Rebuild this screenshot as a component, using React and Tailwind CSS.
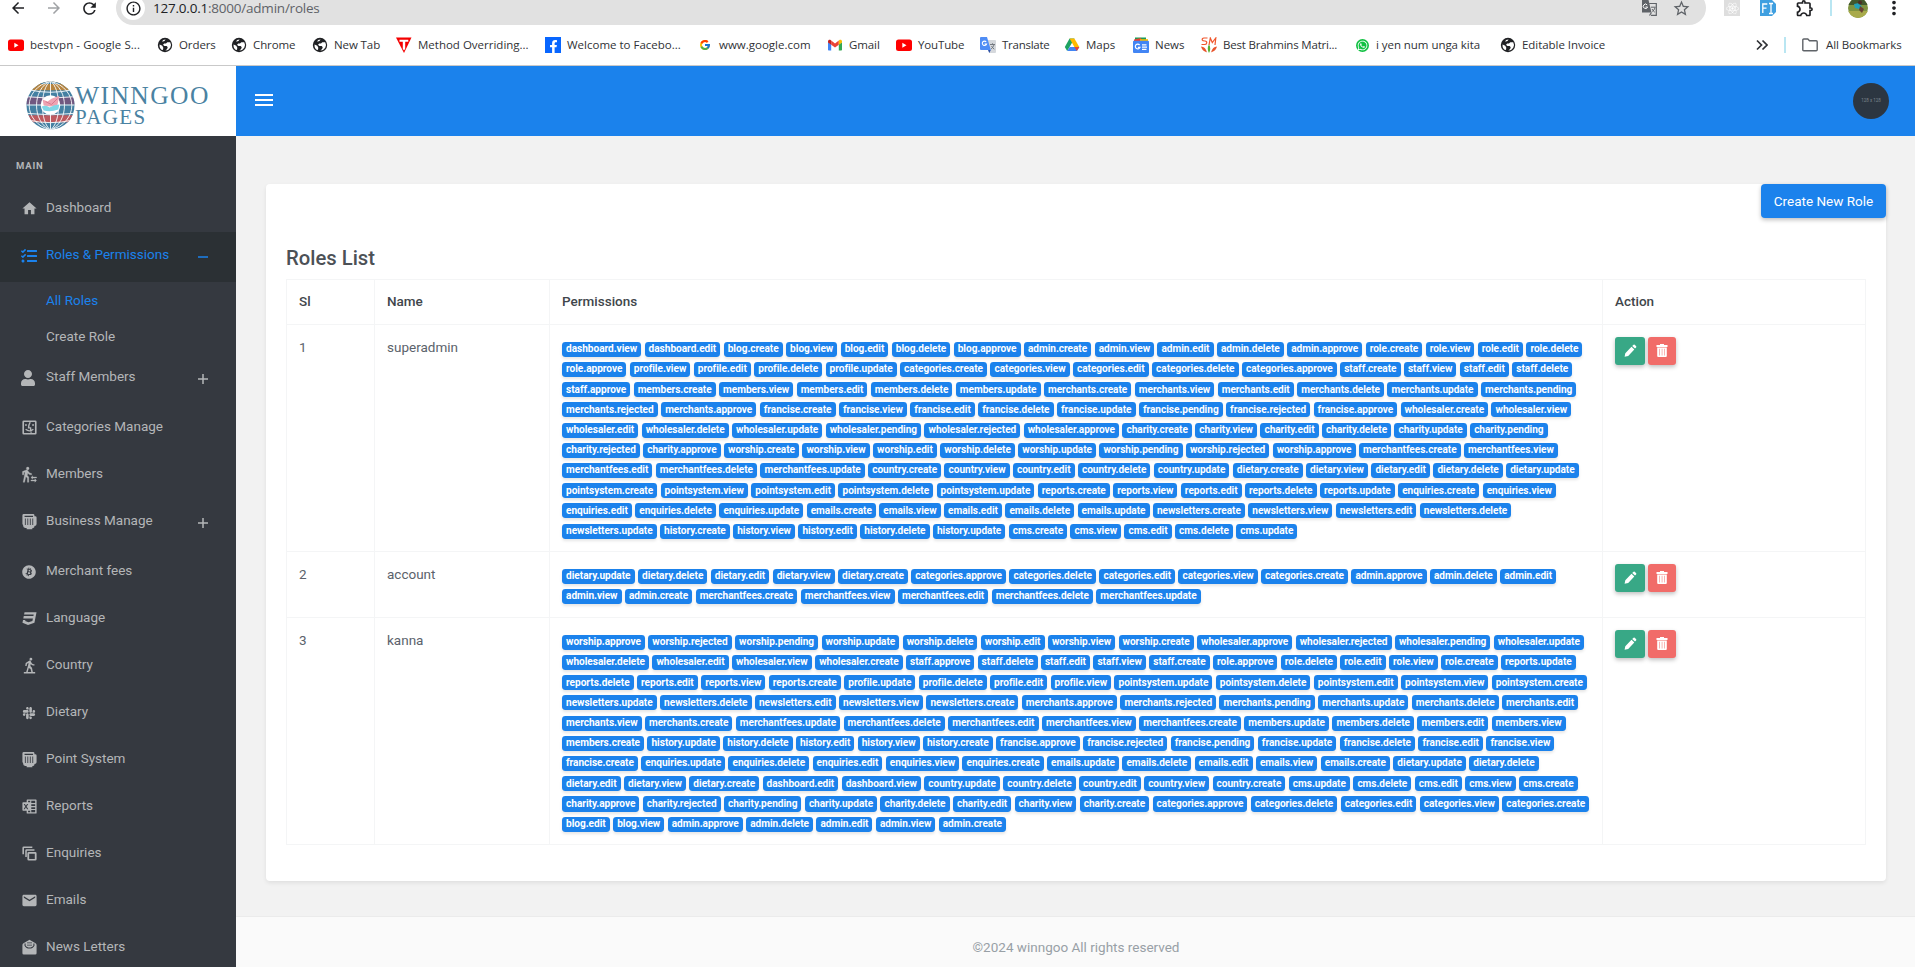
import {
  MdHome, MdEmail, MdArrowBack, MdArrowForward, MdRefresh, MdInfoOutline, MdStarOutline, MdMoreVert, MdOutlineExtension,
} from "react-icons/md";
import { FaTasks, FaUser, FaBitcoin, FaSlack, FaReact, FaWhatsapp, FaFacebookF } from "react-icons/fa";
import { RiCss3Fill } from "react-icons/ri";
import { FcGoogle } from "react-icons/fc";

const A = (group, actions) => actions.split(" ").map((a) => `${group}.${a}`);

const superadmin = [
  ...A("dashboard", "view edit"),
  ...A("blog", "create view edit delete approve"),
  ...A("admin", "create view edit delete approve"),
  ...A("role", "create view edit delete approve"),
  ...A("profile", "view edit delete update"),
  ...A("categories", "create view edit delete approve"),
  ...A("staff", "create view edit delete approve"),
  ...A("members", "create view edit delete update"),
  ...A("merchants", "create view edit delete update pending rejected approve"),
  ...A("francise", "create view edit delete update pending rejected approve"),
  ...A("wholesaler", "create view edit delete update pending rejected approve"),
  ...A("charity", "create view edit delete update pending rejected approve"),
  ...A("worship", "create view edit delete update pending rejected approve"),
  ...A("merchantfees", "create view edit delete update"),
  ...A("country", "create view edit delete update"),
  ...A("dietary", "create view edit delete update"),
  ...A("pointsystem", "create view edit delete update"),
  ...A("reports", "create view edit delete update"),
  ...A("enquiries", "create view edit delete update"),
  ...A("emails", "create view edit delete update"),
  ...A("newsletters", "create view edit delete update"),
  ...A("history", "create view edit delete update"),
  ...A("cms", "create view edit delete update"),
];

const account = [
  ...A("dietary", "update delete edit view create"),
  ...A("categories", "approve delete edit view create"),
  ...A("admin", "approve delete edit view create"),
  ...A("merchantfees", "create view edit delete update"),
];

const kanna = [
  ...A("worship", "approve rejected pending update delete edit view create"),
  ...A("wholesaler", "approve rejected pending update delete edit view create"),
  ...A("staff", "approve delete edit view create"),
  ...A("role", "approve delete edit view create"),
  ...A("reports", "update delete edit view create"),
  ...A("profile", "update delete edit view"),
  ...A("pointsystem", "update delete edit view create"),
  ...A("newsletters", "update delete edit view create"),
  ...A("merchants", "approve rejected pending update delete edit view create"),
  ...A("merchantfees", "update delete edit view create"),
  ...A("members", "update delete edit view create"),
  ...A("history", "update delete edit view create"),
  ...A("francise", "approve rejected pending update delete edit view create"),
  ...A("enquiries", "update delete edit view create"),
  ...A("emails", "update delete edit view create"),
  ...A("dietary", "update delete edit view create"),
  ...A("dashboard", "edit view"),
  ...A("country", "update delete edit view create"),
  ...A("cms", "update delete edit view create"),
  ...A("charity", "approve rejected pending update delete edit view create"),
  ...A("categories", "approve delete edit view create"),
  ...A("blog", "edit view"),
  ...A("admin", "approve delete edit view create"),
];

const roles = [
  { id: 1, name: "superadmin", permissions: superadmin, h: "h-[227px]" },
  { id: 2, name: "account", permissions: account, h: "h-[66px]" },
  { id: 3, name: "kanna", permissions: kanna, h: "h-[227px]" },
];

/* ---------- browser icons ---------- */

const YouTube = () => (
  <svg viewBox="0 0 16 16" className="size-4"><rect y="2.5" width="16" height="11.5" rx="2.5" fill="#f00" /><path d="M6.3 5.8v5l4.2-2.5z" fill="#fff" /></svg>
);
const Globe = () => (
  <svg viewBox="0 0 16 16" className="size-4">
    <circle cx="8" cy="8" r="7.2" fill="#202124" />
    <path d="M13.2 5.2H10.3L9 6.6H7.2L6 7.8l1.4 1.3h2.3l1 1.2-.6 1.6-1.7 1.5A5.4 5.4 0 0 0 13.2 5.2zM2.6 7.4l2.7 1.4 1 2-.3 1.9-1 .2A5.6 5.6 0 0 1 2.6 7.4zM6 3l2.600-.4L7.500 4 5.200 4.800z" fill="#fff" />
  </svg>
);
const TIcon = () => (
  <svg viewBox="0 0 16 16" className="size-4"><path d="M0 0.500h15.500L8 16z" fill="#f40000" /><path d="M3.500 2.800h8.800v2H9.200v7L8 13.500l-1.200-1.700v-7H3.500z" fill="#fff" /></svg>
);
const Fb = () => (
  <span className="flex size-4 items-end justify-center bg-[#0866ff] text-white"><FaFacebookF size={13} /></span>
);
const Gmail = () => (
  <svg viewBox="0 0 16 16" className="size-4">
    <path d="M1 4v8.500c0 .6.4 1 1 1h2.200V7.500L1 5z" fill="#4285f4" /><path d="M15 4v8.500c0 .6-.4 1-1 1h-2.200V7.500L15 5z" fill="#34a853" />
    <path d="M4.200 3.600V7.700L8 10.500l3.800-2.800V3.600L8 6.400z" fill="#ea4335" /><path d="M1 4.500C1 3 2.600 2.300 3.800 3.200l.4.400v4.100L1 5.400z" fill="#c5221f" />
    <path d="M15 4.500c0-1.500-1.600-2.200-2.800-1.300l-.4.400v4.100L15 5.400z" fill="#fbbc04" />
  </svg>
);
const Translate = () => (
  <svg viewBox="0 0 16 16" className="size-4">
    <path d="M6 3h9a1 1 0 0 1 1 1v11a1 1 0 0 1-1 1H9z" fill="#d5d8dc" /><path d="M1 0h6l3.800 13H1a1 1 0 0 1-1-1V1a1 1 0 0 1 1-1z" fill="#4f8df5" />
    <path d="M8 13h2.800L9.300 16z" fill="#2b50a8" />
    <path d="M6.200 4.900A2.200 2.200 0 1 0 6.600 7H4.500" fill="none" stroke="#fff" strokeWidth="1.100" /><path d="M10 7.500h5M12.500 6.300v1.200M14 7.800c-.6 2-1.700 3.300-3 4.200M11.500 9c.8 1.500 1.700 2.500 2.800 3.200" fill="none" stroke="#6b7177" strokeWidth=".9" />
  </svg>
);
const Maps = () => (
  <svg viewBox="0 0 16 16" className="size-4">
    <path d="M5.600 1.500h4.800L8 5.800 3.200 14 .8 10z" fill="#1ea362" /><path d="M5.600 1.500h4.800L15.300 10h-4.900z" fill="#ffba00" />
    <path d="M3.200 14 5.700 10h9.600l-2.400 4z" fill="#4285f4" /><path d="M12.900 14 10.400 10h4.900z" fill="#ea4335" />
  </svg>
);
const News = () => (
  <svg viewBox="0 0 16 16" className="size-4">
    <path d="M2 .5h11v4H2z" fill="#1a9c55" /><path d="M1 2.500 8 1l1 3H1z" fill="#ea4335" /><path d="M7 2.200h8V5H7z" fill="#fbbc04" />
    <rect y="3.800" width="16" height="12.200" rx="1" fill="#4285f4" />
    <path d="M6.600 8A2.400 2.400 0 1 0 7 10.300H4.900M9 7.800h4.500M9 10.100h5M9 12.400h4.500" fill="none" stroke="#fff" strokeWidth="1.200" />
  </svg>
);
const Matri = () => (
  <svg viewBox="0 0 16 16" className="size-4">
    <path d="M6.500 1H3Q.8 1.200 1.300 3q.3 1 2.700 1 2 .2 1.700 1.800Q5.400 7.500 3.500 7.500H.5M8 8l1.300-7 2 4.500L14.800 1 14 8" fill="none" stroke="#f0552b" strokeWidth="1.200" />
    <path d="M0 9.500c3 .3 5 2 6 6-2-1-5-2-6-6zM16 9.500c-3 .3-5 2-6 6 2-1 5-2 6-6z" fill="#e8552d" /><path d="M8 7.500c1.800 2.500 1.500 6 0 8.500-1.500-2.500-1.800-6 0-8.500z" fill="#57b031" />
  </svg>
);
const WhatsApp = () => (
  <span className="flex size-4 items-center justify-center"><span className="flex size-[13px] items-center justify-center rounded-full bg-[#12c143] text-white"><FaWhatsapp size={11} /></span></span>
);

const bookmarks = [
  { label: "bestvpn - Google S...", icon: <YouTube />, w: "w-[149px]", t: "tracking-[0.06px]" },
  { label: "Orders", icon: <Globe />, w: "w-[74px]", t: "tracking-[-0.1px]" },
  { label: "Chrome", icon: <Globe />, w: "w-[81px]", t: "tracking-[-0.1px]" },
  { label: "New Tab", icon: <Globe />, w: "w-[84px]", t: "tracking-[-0.1px]" },
  { label: "Method Overriding...", icon: <TIcon />, w: "w-[149px]", t: "" },
  { label: "Welcome to Facebo...", icon: <Fb />, w: "w-[152px]", t: "" },
  { label: "www.google.com", icon: <span className="flex size-4 items-center justify-center"><FcGoogle size={12} /></span>, w: "w-[130px]", t: "" },
  { label: "Gmail", icon: <Gmail />, w: "w-[69px]", t: "tracking-[-0.1px]" },
  { label: "YouTube", icon: <YouTube />, w: "w-[84px]", t: "tracking-[-0.15px]" },
  { label: "Translate", icon: <Translate />, w: "w-[84px]", t: "tracking-[-0.25px]" },
  { label: "Maps", icon: <Maps />, w: "w-[69px]", t: "" },
  { label: "News", icon: <News />, w: "w-[68px]", t: "" },
  { label: "Best Brahmins Matri...", icon: <Matri />, w: "w-[153px]", t: "tracking-[-0.2px]" },
  { label: "i yen num unga kita", icon: <WhatsApp />, w: "w-[146px]", t: "tracking-[-0.05px]" },
  { label: "Editable Invoice", icon: <Globe />, w: "w-[130px]", t: "tracking-[-0.05px]" },
];

function Browser() {
  return (
    <div className="h-[66px] shrink-0 overflow-hidden border-b border-[#c9c9c9] bg-white font-['Open_Sans',sans-serif] text-[#303236]">
      <div className="-mt-[9px] flex h-[34px] items-center">
        <div className="flex w-[116px] items-center pl-[9px]">
          <MdArrowBack size={18} className="text-[#202124]" />
          <MdArrowForward size={18} className="ml-[18px] text-[#a0a2a5]" />
          <MdRefresh size={19} className="ml-[17px] text-[#202124]" />
        </div>
        <div className="flex h-[34px] w-[1590px] items-center rounded-full bg-[#e1e1e1] pl-[5px]">
          <span className="flex size-6 items-center justify-center rounded-full bg-white text-[#202124]"><MdInfoOutline size={17} /></span>
          <span className="ml-[8px] text-[13.500px] tracking-[-0.220px] text-[#202124]">127.0.0.1<span className="text-[#5f6368]">:8000/admin/roles</span></span>
          <svg viewBox="0 0 16 16" className="ml-auto size-4">
            <path d="M1 0h6.500l3 12.500H1z" fill="#5f6368" /><path d="M8.200 3.500H15.300V15.300H10M8.500 15.500l2-3" fill="none" stroke="#5f6368" strokeWidth="1.200" />
            <path d="M6.200 4.900A2.200 2.200 0 1 0 6.600 7H4.500" fill="none" stroke="#fff" /><path d="M10 7.200h4.500M14 7.500c-.6 2-1.500 3.300-2.600 4.200M11 9c.8 1.500 1.700 2.500 2.800 3.200" fill="none" stroke="#5f6368" />
          </svg>
          <MdStarOutline size={19} className="mr-[15px] ml-[15px] text-[#5f6368]" />
        </div>
        <span className="ml-[18px] flex size-4 items-center justify-center bg-[#dedede] text-white"><FaReact size={13} /></span>
        <svg viewBox="0 0 16 16" className="ml-5 size-4">
          <path d="M0 0h12l4 4v8l-4 4H0z" fill="#3f9fe0" /><path d="M2.800 13V4h4.500M2.800 8.200h3.700M9 3.500h4M9 13.500h4M11 3.500v10" fill="none" stroke="#fff" strokeWidth="1.300" />
        </svg>
        <MdOutlineExtension size={20} className="ml-[19px] text-[#202124]" />
        <span className="ml-[15px] h-4 w-[2px] bg-[#b9e6f2]" />
        <svg viewBox="0 0 20 20" className="ml-4 size-5">
          <defs><clipPath id="face"><circle cx="10" cy="10" r="10" /></clipPath></defs>
          <g clipPath="url(#face)"><rect width="20" height="20" fill="#7f9440" /><rect width="20" height="7" fill="#42582d" /><path d="M0 13h20v7H0z" fill="#a9ab4b" /><path d="M6 6l5-1 3 4-3 2-4-1z" fill="#23a2b8" /><path d="M12 8l4 3-2 4-3-3z" fill="#6a4334" /><circle cx="12" cy="4.500" r="2" fill="#4b2f25" /></g>
        </svg>
        <MdMoreVert size={22} className="ml-[15px] text-[#202124]" />
      </div>
      <div className="flex h-[40px] items-center pl-2 text-[11.500px] whitespace-nowrap">
        {bookmarks.map((b) => (
          <div key={b.label} className={`flex shrink-0 items-center gap-[6px] ${b.w}`}>
            {b.icon}
            <span className={b.t}>{b.label}</span>
          </div>
        ))}
        <svg viewBox="0 0 12 12" className="ml-[126px] size-3" fill="none" stroke="#303236" strokeWidth="1.700"><path d="M1 1.500 5.500 6 1 10.500M6.500 1.500 11 6l-4.500 4.500" /></svg>
        <span className="ml-4 h-4 w-[2px] bg-[#b9e6f2]" />
        <svg viewBox="0 0 16 16" className="ml-4 size-4" fill="none" stroke="#5f6368" strokeWidth="1.400"><path d="M.8 3q0-1 1-1h4l1.700 1.800H14.200q1 0 1 1v8q0 1-1 1H1.800q-1 0-1-1z" /></svg>
        <span className="ml-2 tracking-[-0.08px]">All Bookmarks</span>
      </div>
    </div>
  );
}

/* ---------- sidebar icons ---------- */

const Svg = ({ children }) => <svg viewBox="0 0 24 24" className="size-[17px]" fill="currentColor">{children}</svg>;

const Finder = () => (
  <Svg><path fillRule="evenodd" d="M4 2h16a2 2 0 0 1 2 2v16a2 2 0 0 1-2 2H4a2 2 0 0 1-2-2V4a2 2 0 0 1 2-2zm.3 2.300v15.400h15.400V4.300z" /><path d="M7 7v3M17 7v3M13 4.500c-1.500 2.500-2.300 5-2.300 8H13.500c-.1 2.500.2 4.700 1 7M6.500 14.500c3.300 2.700 7.700 2.700 11 0" fill="none" stroke="currentColor" strokeWidth="1.900" /></Svg>
);
const Transfer = () => (
  <Svg><path d="M16.500 15.500H22V17h-5.500v1.700L14 16.250l2.500-2.500zM19.500 19.750V18L22 20.500 19.500 23v-1.750H14v-1.500zM9.500 5.500a2 2 0 1 0 0-4 2 2 0 0 0 0 4M5.750 8.900 3 23h2.100l1.750-8L9 17v6h2v-7.550L8.950 13.400l.6-3A6.800 6.800 0 0 0 15 12.500v-2a5.200 5.200 0 0 1-4.350-2.450l-.95-1.600C9.350 5.850 8.700 5.500 8 5.500c-.25 0-.5.05-.75.150L2 7.800V12.500h2V9.150z" stroke="currentColor" strokeWidth=".4" /></Svg>
);
const Meter = () => (
  <Svg><path fillRule="evenodd" d="M4 1.500h13a2 2 0 0 1 2 2v1h1a2 2 0 0 1 2 2v9a3 3 0 0 1-3 3v.5a2 2 0 0 1-2 2h-1V23H8v-2H6a3 3 0 0 1-3-3v-1a3 3 0 0 1-1-2V3.500a2 2 0 0 1 2-2zM5 4v1.500h12V4zM5.500 7.800v9H6.700v-9zm3.500 0v9h1.200v-9zm3.500 0v9h1.200v-9zm3.500 0v9h1.200v-9z" /></Svg>
);
const Traveller = () => (
  <Svg><path d="M14 1a2 2 0 1 1 0 4 2 2 0 0 1 0-4M11.500 5.200c1.200-.3 2 .2 2.500 1.200l1 2c.9 1.300 2 1.800 4 1.800v1.900c-2.400 0-4-.8-5.200-2.300l-.6 3 2.300 2.400 1.200 6H20v2H4v-2h3.300l2.800-9.400.6-3.300-2.200 1.200-.5 3H6l.6-4.300zM11 15.500 9.500 21.200h5l-1-4.300z" /></Svg>
);
const Excel = () => (
  <Svg><path fillRule="evenodd" d="M9 2h12a1 1 0 0 1 1 1v18a1 1 0 0 1-1 1H9a1 1 0 0 1-1-1v-3H3a1 1 0 0 1-1-1V7a1 1 0 0 1 1-1h5V3a1 1 0 0 1 1-1zm5.500 2v3H20V4zM10 4v2h3V4zm4.500 4.700v2.600H20V8.700zm0 4.200v2.600H20v-2.600zm0 4.200V20H20v-2.900zM10 18v2h3v-2zM3.800 8.500l2.200 3.600-2.300 3.700h1.700L7 13.200l1.500 2.600h1.800L8 12.100l2.200-3.600H8.500L7 11 5.500 8.500z" /></Svg>
);
const Stack = () => (
  <Svg><path fillRule="evenodd" d="M11 10h9a2 2 0 0 1 2 2v8a2 2 0 0 1-2 2h-9a2 2 0 0 1-2-2v-8a2 2 0 0 1 2-2zm.5 2.300v7.400h8v-7.400zM2 4a2 2 0 0 1 2-2h12v2.200H4.200V13H2zM6 8a2 2 0 0 1 2-2h11v2.200H8.200V17H6z" /></Svg>
);
const Letter = () => (
  <Svg><path fillRule="evenodd" d="M12 1l8.500 5A3 3 0 0 1 22 8.500V20a2 2 0 0 1-2 2H4a2 2 0 0 1-2-2V8.500A3 3 0 0 1 3.500 6zM5 6.500v3c1.500 3 4 4 7 4s5.500-1 7-4v-3h-1.500v2.600c-1.200 2-3.200 2.900-5.500 2.900s-4.300-.9-5.500-2.900V6.500zM8.500 5v1h7V5zm0 3v1h7V8z" /></Svg>
);

const menu = [
  { label: "Staff Members", icon: <FaUser size={16} className="mr-[2px]" />, more: true },
  { label: "Categories Manage", icon: <Finder /> },
  { label: "Members", icon: <Transfer /> },
  { label: "Business Manage", icon: <Meter />, more: true },
  { label: "Merchant fees", icon: <FaBitcoin size={14} /> },
  { label: "Language", icon: <RiCss3Fill size={17} /> },
  { label: "Country", icon: <Traveller /> },
  { label: "Dietary", icon: <FaSlack size={14} /> },
  { label: "Point System", icon: <Meter /> },
  { label: "Reports", icon: <Excel /> },
  { label: "Enquiries", icon: <Stack /> },
  { label: "Emails", icon: <MdEmail size={17} /> },
  { label: "News Letters", icon: <Letter /> },
];

function MenuItem({ label, icon, more, active }) {
  return (
    <div className={`shrink-0 ${more || active ? "h-[50px]" : "h-[47px]"} ${active ? "bg-[#2b3034] text-[#1b82ec]" : ""}`}>
      <div className="flex h-[47px] items-center pl-[19px]">
        <span className="flex w-5 shrink-0 items-center justify-center">{icon}</span>
        <span className="ml-[7px] pb-[2px]">{label}</span>
        {(more || active) && (
          <svg viewBox="0 0 10 10" className="mt-[3px] mr-[28px] ml-auto size-[10px]" stroke="currentColor" strokeWidth="1.500">
            <path d={active ? "M0 5h10" : "M0 5h10M5 0v10"} />
          </svg>
        )}
      </div>
    </div>
  );
}

function Sidebar() {
  return (
    <aside className="flex w-[236px] shrink-0 flex-col overflow-hidden bg-[#353940] text-[13.500px] text-[#b4b6b8]">
      <div className="flex h-[70px] shrink-0 items-center bg-white pl-[26px]">
        <Logo />
        <div className="pt-[10px] font-['Liberation_Serif',serif] text-[#4a82a2]">
          <div className="text-[25.500px] leading-[22px] tracking-[1.450px]">WINNGOO</div>
          <div className="text-[21px] leading-[20px] tracking-[1.400px]">PAGES</div>
        </div>
      </div>
      <div className="flex h-[49px] shrink-0 items-center px-4 pt-[11px] text-[9.500px] font-bold tracking-[0.8px]">MAIN</div>
      <MenuItem label="Dashboard" icon={<MdHome size={17} />} />
      <MenuItem label="Roles & Permissions" icon={<FaTasks size={16} />} active />
      <div className="flex h-9 shrink-0 items-center pl-[46px] text-[#1b82ec]">All Roles</div>
      <div className="flex h-9 shrink-0 items-center pl-[46px]">Create Role</div>
      {menu.map((m) => <MenuItem key={m.label} {...m} />)}
    </aside>
  );
}

const Logo = () => (
  <svg viewBox="0 0 50 50" className="mt-[9px] size-[49px]">
    <defs><clipPath id="globe"><circle cx="25" cy="25" r="24.500" /></clipPath></defs>
    <g clipPath="url(#globe)">
      <rect width="50" height="50" fill="#4480a2" />
      <path d="M0 0h50v9.500H0z" fill="#b58440" />
      <path d="M14 0h22v3H14z" fill="#4480a2" />
      <path d="M0 16h50v8H0z" fill="#705880" />
      <path d="M0 35h50v7H0z" fill="#bd5a5f" />
      <g fill="none" stroke="#fff" strokeWidth=".9">
        <path d="M25 0v50M25 0C14 8 14 42 25 50M25 0c11 8 11 42 0 50M25 0C6 8 6 42 25 50M25 0c19 8 19 42 0 50M25 0C-4 8-4 42 25 50M25 0c29 8 29 42 0 50" />
        <path d="M3 9q22 5 44 0M0 16q25 3 50 0M0 24.500h50M0 33q25 3 50 0M3 40q22 5 44 0" />
      </g>
      <circle cx="25" cy="24.500" r="10" fill="#fff" />
    </g>
    <path d="M17 19l5 2 4-3 8-3-2 10-7 1-7-1z" fill="#eda3b2" /><path d="M16 26q5-2 8 1 5-3 10-3l-1 5q-8 3-15 1z" fill="#7fd6e6" /><path d="M20 21l6 3 6-6" fill="none" stroke="#d8798f" />
  </svg>
);

function Badge({ children }) {
  return (
    <span className="inline-block rounded-[3.400px] bg-[#1b82ec] px-[4.050px] py-[2.530px] text-center align-baseline text-[10.125px] leading-none font-bold tracking-[-0.042px] whitespace-nowrap text-white shadow-[0_2px_3px_rgba(0,0,0,0.1)]">
      {children}
    </span>
  );
}

const Pencil = () => (
  <svg viewBox="0 0 13 13" className="size-[13px]" fill="#fff"><path d="M9.300.9q.6-.7 1.400-.1l1.300 1.200q.7.7.1 1.400l-1.100 1.200L8.200 2zM7.500 2.800l2.800 2.700L4.200 12 .6 12.700 1.300 9.200z" /></svg>
);
const Trash = () => (
  <svg viewBox="0 0 12 13" className="h-[13px] w-3" fill="#fff"><path fillRule="evenodd" d="M4 0h4v1h3.500v2H.5V1H4zM1.200 3.500h9.600V12a1 1 0 0 1-1 1H2.200a1 1 0 0 1-1-1zM3.500 4.800v6.700h.5V4.800zm2.300 0v6.700h.5V4.800zm2.300 0v6.700h.5V4.800z" /></svg>
);

const box = "border border-[#f4f5f6] text-left align-top";

function RolesTable() {
  return (
    <table className="w-[1580px] table-fixed border-collapse leading-[20.200px]">
      <colgroup><col className="w-[88px]" /><col className="w-[175px]" /><col className="w-[1053px]" /><col className="w-[263px]" /></colgroup>
      <thead>
        <tr className="h-[45px] text-[#41464b]">
          {["Sl", "Name", "Permissions", "Action"].map((h) => <th key={h} className={`${box} px-3 pt-[11px] pb-[13px] font-medium`}>{h}</th>)}
        </tr>
      </thead>
      <tbody>
        {roles.map((r) => (
          <tr key={r.id} className={r.h}>
            <td className={`${box} px-3 pt-[11.600px] pb-3`}>{r.id}</td>
            <td className={`${box} px-3 pt-[11.600px] pb-3`}>{r.name}</td>
            <td className={`${box} py-3 pr-[11px] pl-3`}>{r.permissions.flatMap((p) => [<Badge key={p}>{p}</Badge>, " "])}</td>
            <td className={`${box} p-3`}>
              <div className="flex gap-[3px]">
                <span className="flex h-7 w-[30px] items-center justify-center rounded-[3px] bg-[#38a886] pb-[2px] shadow-[0_2px_4px_rgba(0,0,0,0.25)]"><Pencil /></span>
                <span className="flex h-7 w-7 items-center justify-center rounded-[3px] bg-[#f16c69] pb-[2px] shadow-[0_2px_4px_rgba(0,0,0,0.25)]"><Trash /></span>
              </div>
            </td>
          </tr>
        ))}
      </tbody>
    </table>
  );
}

export default function App() {
  return (
    <div className="flex h-[967px] w-[1915px] flex-col overflow-hidden bg-[#f2f2f2] font-['Roboto',sans-serif] text-[13.500px] text-[#5b626b]">
      <Browser />
      <div className="flex min-h-0 flex-1">
        <Sidebar />
        <div className="flex flex-1 flex-col">
          <header className="flex h-[70px] shrink-0 items-center justify-between bg-[#1b82ec] pr-[27px] pl-[19px]">
            <div className="mb-[2px] flex w-[18px] flex-col gap-[3px]">
              <span className="h-[2px] bg-white" /><span className="h-[2px] bg-white" /><span className="h-[2px] bg-white" />
            </div>
            <span className="flex size-9 items-center justify-center rounded-full bg-[#2c3641] text-[4.500px] text-[#7d858c]">128 x 128</span>
          </header>
          <main className="flex-1 px-[30px] pt-12">
            <section className="h-[697px] w-[1620px] rounded-[4px] bg-white shadow-[0_2px_4px_rgba(0,0,0,0.08)]">
              <div className="flex justify-end">
                <button className="h-[34px] w-[125px] rounded-[4px] bg-[#1b82ec] pt-px text-[13.500px] text-white shadow-[0_2px_4px_rgba(0,0,0,0.25)]">Create New Role</button>
              </div>
              <div className="px-5 pt-[29px]">
                <h4 className="h-[32px] text-[20.250px] leading-[23px] font-medium text-[#4c5156]">Roles List</h4>
                <RolesTable />
              </div>
            </section>
          </main>
          <footer className="flex h-[51px] shrink-0 items-center justify-center border-t border-[#ebebeb] bg-[#fafafa] pt-[10px] text-[#98a0a6]">©2024 winngoo All rights reserved</footer>
        </div>
      </div>
    </div>
  );
}
